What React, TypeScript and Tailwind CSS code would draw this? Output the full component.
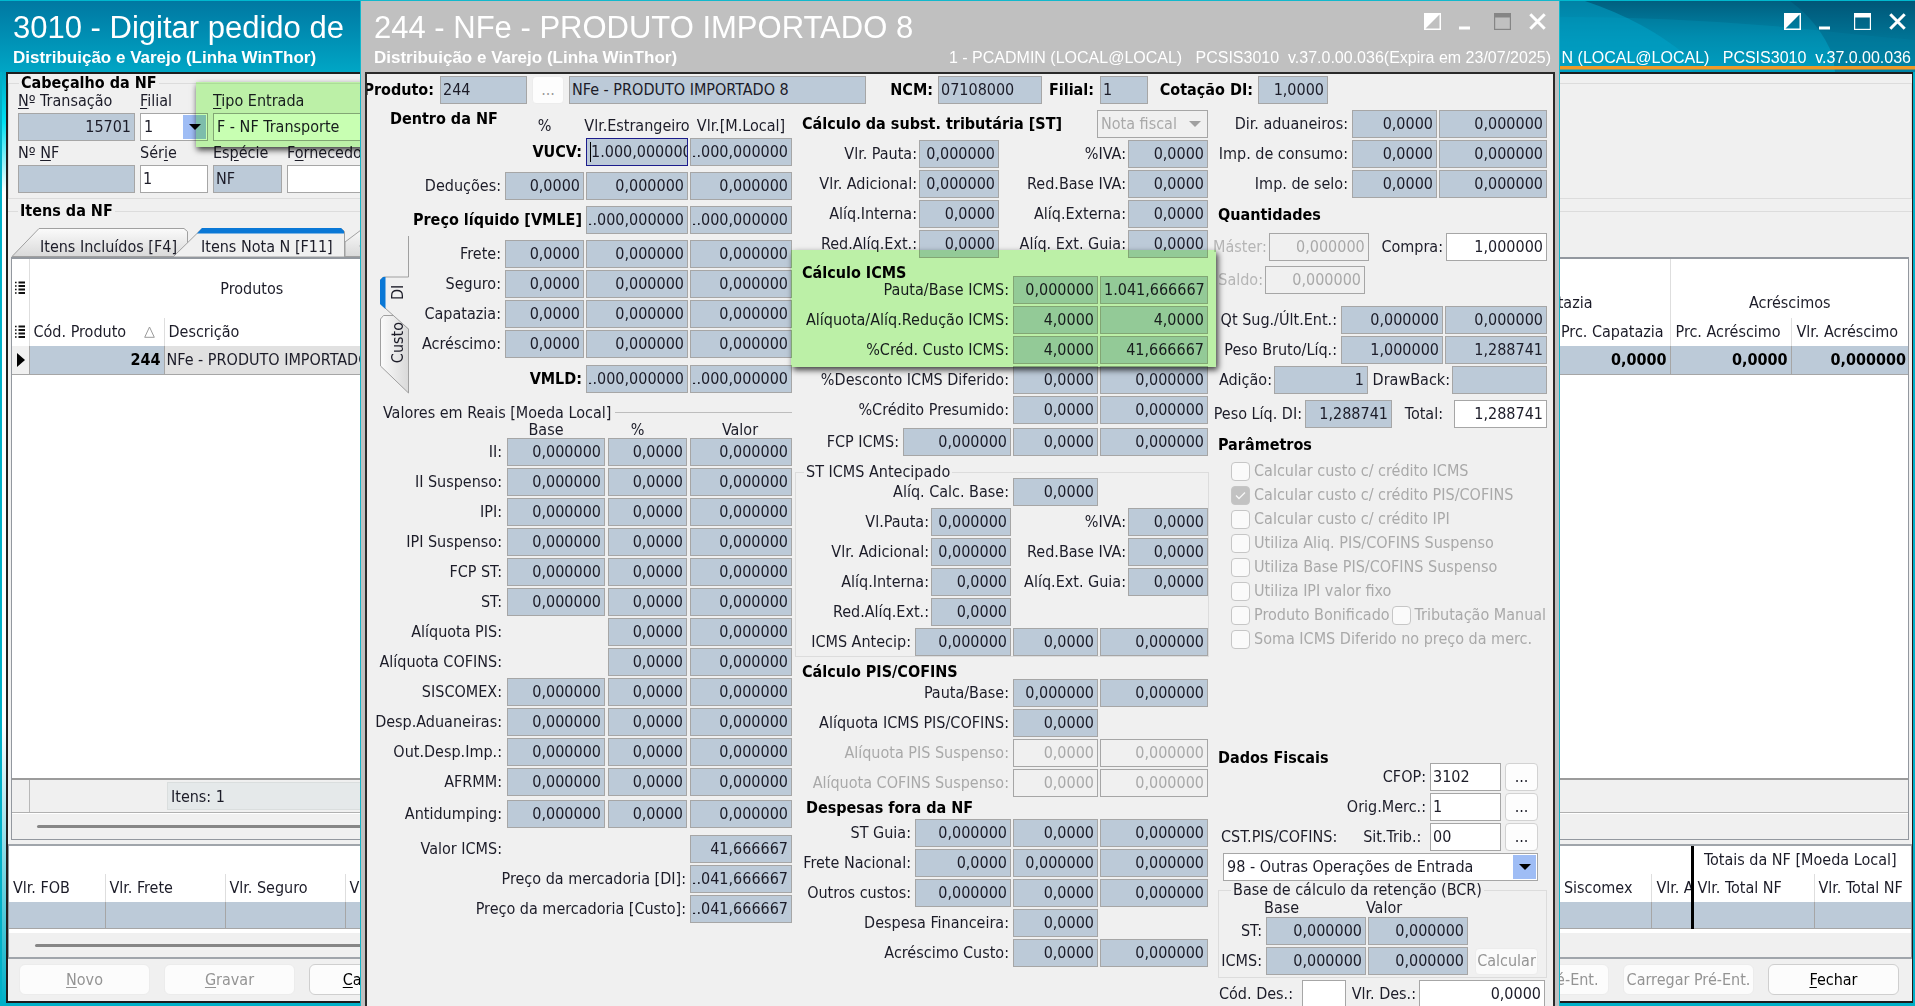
import { useId, type ReactNode } from "react";

type Tone = "locked" | "edit" | "off";

const tones: Record<Tone, string> = {
  locked: "bg-[#bccad8] text-[#1c1c28]",
  edit: "bg-white text-[#1c1c28]",
  off: "bg-[#f0f0f0] text-[#a9a9a9]",
};

const Z4 = "0,0000";
const Z6 = "0,000000";

/* ---------- basic controls ---------- */

function Field({
  id,
  name,
  value,
  w,
  tone = "locked",
  left = false,
  clip = false,
}: {
  id?: string;
  name?: string;
  value: string;
  w: string;
  tone?: Tone;
  left?: boolean;
  clip?: boolean;
}) {
  return (
    <input
      id={id}
      aria-label={name}
      type="text"
      dir={clip ? "rtl" : undefined}
      defaultValue={value}
      readOnly={tone === "locked"}
      disabled={tone === "off"}
      className={`h-7 shrink-0 border border-[#a6a6a6] pb-px outline-none ${clip ? "pr-[3px] pl-[2px]" : left ? "px-[2px]" : "px-[3px] text-right"} ${tones[tone]} ${w}`}
    />
  );
}

type Cell = { v?: string; w: string; tone?: Tone; clip?: boolean } | { label: string; w: string; off?: boolean };

function Row({
  label,
  cells,
  gap = "gap-[2px]",
  bold = false,
  off = false,
}: {
  label: string;
  cells: Cell[];
  gap?: string;
  bold?: boolean;
  off?: boolean;
}) {
  const base = useId();
  let current = label;
  return (
    <div className={`flex h-7 items-center justify-end ${gap}`}>
      <label
        htmlFor={`${base}-0`}
        className={`whitespace-nowrap pr-[2px] ${bold ? "font-bold text-black" : ""} ${off ? "text-[#a9a9a9]" : ""}`}
      >
        {label}
      </label>
      {cells.map((c, i) => {
        if ("label" in c) {
          current = c.label;
          return (
            <label
              key={i}
              htmlFor={`${base}-${i + 1}`}
              className={`shrink-0 whitespace-nowrap pr-[2px] text-right ${c.w}`}
            >
              {c.label}
            </label>
          );
        }
        if (c.v === undefined) return <span key={i} className={`shrink-0 ${c.w}`} />;
        return (
          <Field
            key={i}
            id={`${base}-${i}`}
            name={`${current} ${i + 1}`}
            value={c.v}
            w={c.w}
            tone={c.tone ?? (off ? "off" : "locked")}
            clip={c.clip}
          />
        );
      })}
    </div>
  );
}

function Arrow({ className }: { className: string }) {
  return (
    <svg viewBox="0 0 12 6" className={className} aria-hidden="true">
      <path d="M0 0h12L6 6z" fill="currentColor" />
    </svg>
  );
}

function Select({
  id,
  name,
  value,
  w,
  off = false,
}: {
  id?: string;
  name?: string;
  value: string;
  w: string;
  off?: boolean;
}) {
  return (
    <div className={`relative shrink-0 ${w}`}>
      <select
        id={id}
        aria-label={name}
        disabled={off}
        className={`h-7 w-full appearance-none border border-[#a6a6a6] px-[3px] pb-px opacity-100 outline-none ${off ? "bg-[#f0f0f0] text-[#a9a9a9]" : "bg-white"}`}
      >
        <option>{value}</option>
      </select>
      <span
        className={`pointer-events-none absolute inset-y-[2px] right-[2px] flex w-[23px] items-center justify-center ${off ? "text-[#a0a0a0]" : "bg-[#9fbdf5] text-black"}`}
      >
        <Arrow className="h-[6px] w-3" />
      </span>
    </div>
  );
}

function Dots({ w, off = false, name }: { w: string; off?: boolean; name: string }) {
  return (
    <button
      type="button"
      aria-label={name}
      disabled={off}
      className={`h-7 shrink-0 rounded border bg-[#fdfdfd] leading-none ${off ? "border-[#ececec] text-[#9a9a9a]" : "border-[#d2d2d2]"} ${w}`}
    >
      ...
    </button>
  );
}

function Heading({ children, className }: { children: ReactNode; className: string }) {
  return <h2 className={`whitespace-nowrap font-bold text-black ${className}`}>{children}</h2>;
}

function Check({ label, checked = false }: { label: string; checked?: boolean }) {
  return (
    <label className="flex items-center gap-1 whitespace-nowrap text-[#a9a9a9]">
      <span className="relative flex h-[19px] w-[19px]">
        <input
          type="checkbox"
          disabled
          defaultChecked={checked}
          className="h-[19px] w-[19px] appearance-none rounded border border-[#c6c6c6] bg-[#fafafa] checked:bg-[#c2c2c2]"
        />
        {checked && (
          <svg viewBox="0 0 19 19" className="absolute inset-0" aria-hidden="true">
            <path d="M5 9.500l3 3 6-6" fill="none" stroke="#f6f6f6" strokeWidth="1.4" />
          </svg>
        )}
      </span>
      {label}
    </label>
  );
}

/* ---------- window chrome ---------- */

function WindowButtons({ maxColor }: { maxColor: string }) {
  return (
    <div className="flex items-center text-white">
      <button type="button" aria-label="Alternar tema" className="mr-[18px]">
        <svg viewBox="0 0 17 17" className="h-[17px] w-[17px]" aria-hidden="true">
          <rect x=".75" y=".75" width="15.5" height="15.5" fill="none" stroke="#fff" strokeWidth="1.5" />
          <path d="M0 0h17L0 17z" fill="#fff" />
        </svg>
      </button>
      <button type="button" aria-label="Minimizar" className="mr-6">
        <svg viewBox="0 0 11 17" className="h-[17px] w-[11px]" aria-hidden="true">
          <rect y="13.5" width="11" height="3" fill="#fff" />
        </svg>
      </button>
      <button type="button" aria-label="Maximizar" className={`mr-[18px] ${maxColor}`}>
        <svg viewBox="0 0 17 17" className="h-[17px] w-[17px]" aria-hidden="true">
          <rect x=".6" y=".6" width="15.8" height="15.8" fill="none" stroke="currentColor" strokeWidth="1.2" />
          <rect width="17" height="4.5" fill="currentColor" />
        </svg>
      </button>
      <button type="button" aria-label="Fechar janela">
        <svg viewBox="0 0 17 17" className="h-[17px] w-[17px]" aria-hidden="true">
          <path d="M1.300 1.300l14.400 14.400M15.700 1.300L1.300 15.700" stroke="#fff" strokeWidth="3" />
        </svg>
      </button>
    </div>
  );
}

function TitleBar({ title, status, maxColor }: { title: string; status: string; maxColor: string }) {
  return (
    <header className="relative flex h-[71px] shrink-0 justify-between font-['Liberation_Sans',sans-serif] text-white">
      <div className="pt-[9px] pl-[13px] whitespace-nowrap">
        <h1 className="text-[31px] leading-9">{title}</h1>
        <p className="text-[17px] leading-6 font-bold">Distribuição e Varejo (Linha WinThor)</p>
      </div>
      <div className="flex flex-col items-end pt-3">
        <div className="pr-[9px]">
          <WindowButtons maxColor={maxColor} />
        </div>
        <p className="mt-4 pr-1 text-base leading-6 whitespace-pre">{status}</p>
      </div>
    </header>
  );
}

/* ---------- main order window ---------- */

function Labeled({ label, mark, children, id }: { label: string; mark: number; children: ReactNode; id: string }) {
  return (
    <div className="flex flex-col gap-[3px]">
      <label htmlFor={id} className="leading-[18px] whitespace-nowrap">
        {label.slice(0, mark)}
        <u className="underline-offset-2">{label[mark]}</u>
        {label.slice(mark + 1)}
      </label>
      {children}
    </div>
  );
}

function ListIcon() {
  return (
    <svg viewBox="0 0 10 15" className="mx-auto h-[15px] w-[10px]" aria-hidden="true">
      <path d="M3.500 1.500H10M3.500 5H10M3.500 8.500H10M3.500 12H10" stroke="#111" strokeWidth="1.8" />
      <path d="M0 1.500h1.600M0 5h1.600M0 8.500h1.600M0 12h1.600" stroke="#111" strokeWidth="1.6" />
    </svg>
  );
}

function HeaderFields() {
  return (
    <fieldset className="min-w-0 border border-[#dcdcdc] pb-[5px] pl-[9px]">
      <legend className="ml-[1px] px-[2px] leading-[18px] font-bold text-black">Cabeçalho da NF</legend>
      <div className="flex gap-[5px]">
        <Labeled id="transacao" label="Nº Transação" mark={0}>
          <Field id="transacao" value="15701" w="w-[117px]" />
        </Labeled>
        <Labeled id="filial" label="Filial" mark={0}>
          <Select id="filial" value="1" w="w-[68px]" />
        </Labeled>
        <div className="relative">
          <Labeled id="tipo" label="Tipo Entrada" mark={0}>
            <Select id="tipo" value="F - NF Transporte" w="w-[300px]" />
          </Labeled>
          <div className="pointer-events-none absolute -top-[10px] right-0 -bottom-[6px] -left-[17px] bg-[#c8ffb2] mix-blend-multiply shadow-[1px_3px_6px_rgba(0,0,0,0.75)]" />
        </div>
      </div>
      <div className="mt-[3px] flex gap-[5px]">
        <Labeled id="numero" label="Nº NF" mark={3}>
          <Field id="numero" value="" w="w-[117px]" />
        </Labeled>
        <Labeled id="serie" label="Série" mark={3}>
          <Field id="serie" value="1" w="w-[68px]" tone="edit" left />
        </Labeled>
        <Labeled id="especie" label="Espécie" mark={2}>
          <Field id="especie" value="NF" w="w-[69px]" left />
        </Labeled>
        <Labeled id="fornecedor" label="Fornecedor" mark={1}>
          <Field id="fornecedor" value="" w="w-[320px]" tone="edit" />
        </Labeled>
      </div>
    </fieldset>
  );
}

function Tabs() {
  return (
    <div className="relative ml-[3px] flex h-[29px] shrink-0 overflow-hidden">
      <svg viewBox="0 0 520 29" className="absolute inset-0 h-[29px] w-[520px]" aria-hidden="true">
        <defs>
          <linearGradient id="tabFace" x1="0" y1="0" x2="0" y2="1">
            <stop offset="0" stopColor="#fbfbfb" />
            <stop offset="1" stopColor="#d9d9d9" />
          </linearGradient>
        </defs>
        <path d="M334 28.500V14l18-13.500H500v28z" fill="url(#tabFace)" stroke="#a0a0a0" />
        <path d="M1 28.500L28 .5H173l3.500 3V28.500z" fill="url(#tabFace)" stroke="#a0a0a0" />
        <path d="M162 29L188 3.500 191 .5H330l3.500 3V29z" fill="#f0f0f0" stroke="#a0a0a0" />
        <path d="M186 5.500L191 0h139l3 3v2.500z" fill="#0a78d6" />
      </svg>
      <button type="button" className="relative w-[165px] pt-[7px] pl-[29px] text-left leading-6 whitespace-nowrap">
        Itens Incluídos [F4]
      </button>
      <button type="button" className="relative w-[168px] pt-[7px] pl-[25px] text-left leading-6 whitespace-nowrap">
        Itens Nota N [F11]
      </button>
      <button type="button" className="relative w-[170px] pt-[7px] pl-[15px] text-left leading-6 whitespace-nowrap">
        Cotas
      </button>
    </div>
  );
}

function ItemsTable() {
  return (
    <div className="mx-[3px] mb-1 flex min-h-0 flex-1 flex-col border border-t-2 border-[#93989f] bg-white">
      <table className="w-full table-fixed border-collapse">
        <colgroup>
          <col className="w-[17px]" />
          <col className="w-[135px]" />
          <col className="w-[310px]" />
          <col />
          <col className="w-[115px]" />
          <col className="w-[115px]" />
          <col className="w-[121px]" />
          <col className="w-[116px]" />
        </colgroup>
        <thead className="font-normal">
          <tr className="h-[59px]">
            <th className="border-r border-[#dedede]"><ListIcon /></th>
            <th colSpan={2} className="font-normal">Produtos</th>
            <th />
            <th colSpan={2} className="border-r border-[#dedede] pt-[28px] pl-[2px] font-normal">Capatazia</th>
            <th colSpan={2} className="pt-[28px] font-normal">Acréscimos</th>
          </tr>
          <tr className="h-7 text-left whitespace-nowrap">
            <th className="border-r border-[#dedede]"><ListIcon /></th>
            <th className="border-r border-[#dedede] pl-1 font-normal">
              <span className="flex items-center justify-between pr-[9px]">
                Cód. Produto
                <svg viewBox="0 0 11 12" className="h-3 w-[11px]" aria-hidden="true">
                  <path d="M5.500 1L10.300 11.300H.7z" fill="none" stroke="#9a9a9a" />
                </svg>
              </span>
            </th>
            <th className="pl-1 font-normal">Descrição</th>
            <th />
            <th className="pl-1 font-normal">Vlr. Capatazia</th>
            <th className="border-r border-[#dedede] pl-[5px] font-normal">Prc. Capatazia</th>
            <th className="border-r border-[#dedede] pl-1 font-normal">Prc. Acréscimo</th>
            <th className="pl-1 font-normal">Vlr. Acréscimo</th>
          </tr>
        </thead>
        <tbody>
          <tr className="h-7 border-b border-[#a6a6a6] bg-[#bccad8] text-right font-bold whitespace-nowrap text-black">
            <td className="border-r border-[#a6a6a6] bg-[#f0f0f0] pl-[5px]">
              <svg viewBox="0 0 8 14" className="h-[14px] w-2" aria-hidden="true">
                <path d="M0 0l8 7-8 7z" fill="#000" />
              </svg>
            </td>
            <td className="border-r border-[#a6a6a6] pr-[3px]">244</td>
            <td className="bg-[#e1e1e1] pl-[2px] text-left font-normal text-[#1c1c28]">NFe - PRODUTO IMPORTADO 8</td>
            <td className="bg-[#e1e1e1]" />
            <td className="pr-1">0,0000</td>
            <td className="border-r border-[#a6a6a6] pr-1">0,0000</td>
            <td className="border-r border-[#a6a6a6] pr-1">0,0000</td>
            <td className="pr-[2px]">0,000000</td>
          </tr>
        </tbody>
      </table>
      <div className="flex-1" />
      <div className="flex h-[35px] border-t-2 border-b border-t-[#9b9b9b] border-b-[#b0b0b0] bg-[#f0f0f0]">
        <div className="w-[18px] border-r border-[#b8b8b8]" />
        <div className="my-[2px] ml-[137px] w-[700px] border border-[#dadede] bg-[#e5e9ea] pl-[3px] leading-7">Itens: 1</div>
      </div>
      <div className="flex h-[26px] items-center border-t border-white bg-[#f0f0f0] pl-[25px]">
        <div className="h-[3px] w-3/5 rounded bg-[#868686]" />
      </div>
    </div>
  );
}

function TotalsTable() {
  const cell = "border-r border-[#dedede] pl-1 font-normal";
  const data = "border-r border-[#a6a6a6]";
  return (
    <div className="shrink-0 border-x border-y-2 border-x-[#93989f] border-y-[#a0a5ab] bg-white">
      <table className="w-full table-fixed border-collapse">
        <colgroup>
          <col className="w-[96px]" />
          <col className="w-[120px]" />
          <col className="w-[120px]" />
          <col className="w-[120px]" />
          <col />
          <col className="w-[92px]" />
          <col className="w-[40px]" />
          <col className="w-[122px]" />
          <col className="w-[97px]" />
        </colgroup>
        <thead>
          <tr className="h-7">
            <th colSpan={7} />
            <th colSpan={2} className="border-l-[3px] border-black pr-1 font-normal whitespace-nowrap">
              Totais da NF [Moeda Local]
            </th>
          </tr>
          <tr className="h-7 text-left whitespace-nowrap">
            <th className={cell}>Vlr. FOB</th>
            <th className={cell}>Vlr. Frete</th>
            <th className={cell}>Vlr. Seguro</th>
            <th className={cell}>Vlr. Outros</th>
            <th />
            <th className={cell}>Siscomex</th>
            <th className="overflow-hidden pl-1 font-normal">Vlr. AFRMM</th>
            <th className="border-r border-l-[3px] border-r-[#dedede] border-l-black pl-1 font-normal">Vlr. Total NF</th>
            <th className="pl-1 font-normal">Vlr. Total NF</th>
          </tr>
        </thead>
        <tbody>
          <tr className="h-[27px] border-b border-[#a6a6a6] bg-[#bccad8]">
            <td className={data} />
            <td className={data} />
            <td className={data} />
            <td className={data} />
            <td />
            <td className={data} />
            <td />
            <td className="border-r border-l-[3px] border-r-[#a6a6a6] border-l-black" />
            <td />
          </tr>
        </tbody>
      </table>
      <div className="mt-1 flex h-[24px] items-center bg-[#f0f0f0] pl-[26px]">
        <div className="h-[3px] w-3/5 rounded bg-[#868686]" />
      </div>
    </div>
  );
}

function Action({ label, mark, off = false }: { label: string; mark?: number; off?: boolean }) {
  return (
    <button
      type="button"
      disabled={off}
      className={`h-[31px] w-[131px] rounded-md border bg-[#fcfcfc] whitespace-nowrap ${off ? "border-[#ececec] text-[#949494]" : "border-[#cfcfcf] text-black"}`}
    >
      {mark === undefined ? (
        label
      ) : (
        <>
          <u className="underline-offset-2">{label[mark]}</u>
          {label.slice(mark + 1)}
        </>
      )}
    </button>
  );
}

function OrderWindow() {
  return (
    <section className="flex h-full flex-col border-t border-[#00b9cf] bg-[#00b0c8]">
      <div className="relative shrink-0 bg-gradient-to-b from-[#0078a2] to-[#00a6c5]">
        <svg viewBox="0 0 400 71" preserveAspectRatio="none" className="absolute top-0 right-0 h-[71px] w-[400px]" aria-hidden="true">
          <defs>
            <linearGradient id="deep" x1="0" y1="0" x2="0" y2="1">
              <stop offset="0" stopColor="#005f80" />
              <stop offset=".5" stopColor="#0086a8" />
              <stop offset="1" stopColor="#009fc0" />
            </linearGradient>
          </defs>
          <rect width="400" height="71" fill="url(#deep)" />
          <path d="M0 0H70Q130 20 172 55L178 71H0z" fill="#00a5cc" opacity=".5" />
          <path d="M0 16Q160 14 310 30T400 36V71H0z" fill="#00a0c4" opacity=".25" />
          <path d="M275 0Q305 22 318 55L320 71H400V0z" fill="#003f60" opacity=".28" />
          <path d="M0 65H400v3.500H0z" fill="#ef9a27" />
        </svg>
        <TitleBar
          title="3010 - Digitar pedido de"
          status="1 - PCADMIN (LOCAL@LOCAL)   PCSIS3010  v.37.0.00.036"
          maxColor="text-white"
        />
      </div>
      <div className="flex min-h-0 flex-1 pb-[3px]">
        <div className="w-[6px] shrink-0 border-l-2 border-[#00b0c8] bg-[linear-gradient(to_bottom,#00a8c4_0,#00e0f2_50px,#ffffff_120px,#ffffff_70%,#00b0c8_100%)]" />
        <main className="mr-[2px] flex min-w-0 flex-1 flex-col border-2 border-r border-[#1d1d1d] bg-[#f0f0f0]">
          <HeaderFields />
          <fieldset className="mt-[3px] flex min-h-0 min-w-0 flex-1 flex-col border-t border-[#dcdcdc]">
            <legend className="ml-[10px] px-[2px] leading-[18px] font-bold text-black">Itens da NF</legend>
            <div className="flex h-full flex-col pt-2">
              <Tabs />
              <ItemsTable />
            </div>
          </fieldset>
          <TotalsTable />
          <footer className="flex h-[42px] shrink-0 items-center gap-[14px] pr-[13px] pb-px pl-[11px]">
            <Action label="Novo" mark={0} off />
            <Action label="Gravar" mark={0} off />
            <Action label="Cancelar" mark={0} />
            <span className="flex-1" />
            <Action label="Gravar Pré-Ent." off />
            <Action label="Carregar Pré-Ent." off />
            <Action label="Fechar" mark={0} />
          </footer>
        </main>
      </div>
    </section>
  );
}

/* ---------- product window ---------- */

function ProductBar() {
  return (
    <div className="flex h-9 items-center pb-[4px]">
      <label htmlFor="produto" className="flex w-[67px] justify-end overflow-hidden font-bold text-black">Produto:</label>
      <div className="ml-[6px] flex items-center">
        <Field id="produto" value="244" w="w-[87px]" left />
      </div>
      <div className="mx-[5px] flex">
        <Dots name="Buscar produto" w="w-8" off />
      </div>
      <Field name="Descrição do produto" value="NFe - PRODUTO IMPORTADO 8" w="w-[297px]" left />
      <label htmlFor="ncm" className="mr-[5px] w-[67px] text-right font-bold text-black">NCM:</label>
      <Field id="ncm" value="07108000" w="w-[104px]" left />
      <label htmlFor="filialProduto" className="mr-[6px] w-[52px] text-right font-bold text-black">Filial:</label>
      <Field id="filialProduto" value="1" w="w-12" left />
      <label htmlFor="cotacao" className="mr-[5px] w-[105px] text-right font-bold whitespace-nowrap text-black">Cotação DI:</label>
      <Field id="cotacao" value="1,0000" w="w-[70px]" />
    </div>
  );
}

const P = "w-[79px]";
const E = "w-[102px]";
const L = "w-[102px]";
const B = "w-[98px]";

function SideTabs() {
  return (
    <div className="relative w-8 shrink-0">
      <svg viewBox="0 0 32 162" className="absolute inset-0 h-[162px] w-8" aria-hidden="true">
        <defs>
          <linearGradient id="sideFace" x1="0" y1="0" x2="1" y2="0">
            <stop offset="0" stopColor="#fbfbfb" />
            <stop offset="1" stopColor="#d9d9d9" />
          </linearGradient>
        </defs>
        <path d="M1.500 85l3-3.500h12L29.500 95v64L1.500 132z" fill="url(#sideFace)" stroke="#a0a0a0" />
        <path d="M29.500 2v41H4.500l-3 3v24L29.500 95" fill="#f0f0f0" stroke="#a0a0a0" />
        <path d="M6.500 43H4l-3 3v24l5.500 5z" fill="#0a78d6" />
      </svg>
      <button type="button" className="absolute top-[48px] left-[10px] h-5 rotate-180 leading-[18px] [writing-mode:vertical-rl]">DI</button>
      <button type="button" className="absolute top-[88px] left-[10px] rotate-180 leading-[18px] [writing-mode:vertical-rl]">Custo</button>
    </div>
  );
}

function InsideInvoice() {
  const three = (label: string) => (
    <Row label={label} cells={[{ v: Z4, w: P }, { v: Z6, w: E }, { v: Z6, w: L }]} />
  );
  const tax = (label: string, base = true) => (
    <Row key={label} gap="gap-[3px]" label={label} cells={[base ? { v: Z6, w: B } : { w: B }, { v: Z4, w: P }, { v: Z6, w: L }]} />
  );
  return (
    <div className="pr-[3px]">
      <div className="flex h-7 items-end gap-[2px] leading-6">
        <Heading className="flex-1 self-start pl-[23px] leading-[18px]">Dentro da NF</Heading>
        <span className="flex w-[79px] justify-center">%</span>
        <span className="flex w-[102px] justify-center whitespace-nowrap">Vlr.Estrangeiro</span>
        <span className="flex w-[102px] justify-center whitespace-nowrap">Vlr.[M.Local]</span>
      </div>
      <div className="flex flex-col gap-[6px]">
        <div className="flex h-7 items-center justify-end gap-[2px]">
          <label htmlFor="vucv" className="pr-[2px] font-bold text-black">VUCV:</label>
          <div className="relative flex">
            <input
              id="vucv"
              type="text"
              defaultValue="1.000,000000"
              className="h-7 w-[102px] border border-[#1c1c8c] bg-[#bccad8] pb-px pl-1 text-[#1c1c28] outline-none"
            />
            <span className="absolute top-1 left-1 h-5 w-px bg-black" />
          </div>
          <Field name="VUCV moeda local" value="1.000,000000" w={L} clip />
        </div>
        {three("Deduções:")}
        <Row label="Preço líquido [VMLE]" bold cells={[{ v: "1.000,000000", w: E, clip: true }, { v: "1.000,000000", w: L, clip: true }]} />
      </div>
      <div className="flex pl-3">
        <SideTabs />
        <div className="flex flex-1 flex-col gap-[2px] pt-[6px]">
          {three("Frete:")}
          {three("Seguro:")}
          {three("Capatazia:")}
          {three("Acréscimo:")}
          <div className="pt-[5px]">
            <Row label="VMLD:" bold cells={[{ v: "1.000,000000", w: E, clip: true }, { v: "1.000,000000", w: L, clip: true }]} />
          </div>
        </div>
      </div>
      <div className="mt-[11px] flex h-[17px] items-center gap-1 pl-4 leading-[17px]">
        <h3 className="whitespace-nowrap">Valores em Reais [Moeda Local]</h3>
        <span className="h-px flex-1 bg-[#bdbdbd]" />
      </div>
      <div className="flex justify-end gap-[3px] text-center leading-[17px]">
        <span className="w-[98px] pr-5">Base</span>
        <span className="w-[79px] pr-5">%</span>
        <span className="w-[102px] pr-[2px]">Valor</span>
      </div>
      <div className="flex flex-col gap-[2px]">
        {["II:", "II Suspenso:", "IPI:", "IPI Suspenso:", "FCP ST:", "ST:"].map((l) => tax(l))}
        {["Alíquota PIS:", "Alíquota COFINS:"].map((l) => tax(l, false))}
        {["SISCOMEX:", "Desp.Aduaneiras:", "Out.Desp.Imp.:", "AFRMM:"].map((l) => tax(l))}
      </div>
      <div className="mt-1">{tax("Antidumping:")}</div>
      <div className="mt-[7px] flex flex-col gap-[2px]">
        <Row gap="gap-[3px]" label="Valor ICMS:" cells={[{ w: B }, { w: P }, { v: "41,666667", w: L }]} />
        <Row label="Preço da mercadoria [DI]:" cells={[{ v: "1.041,666667", w: L, clip: true }]} />
        <Row label="Preço da mercadoria [Custo]:" cells={[{ v: "1.041,666667", w: L, clip: true }]} />
      </div>
    </div>
  );
}

const M = "w-[85px]";
const R = "w-[108px]";
const S = "w-[80px]";

function TaxCalculation() {
  const pair = (a: string, va: string, b: string) => (
    <Row gap="gap-0" label={a} cells={[{ v: va, w: S }, { label: b, w: "w-[129px]" }, { v: Z4, w: S }]} />
  );
  const antecip = (a: string, va: string, b: string) => (
    <Row gap="gap-0" label={a} cells={[{ v: va, w: S }, { label: b, w: "w-[117px]" }, { v: Z4, w: S }]} />
  );
  const two = (label: string, a = Z4, b = Z6, off = false) => (
    <Row label={label} off={off} cells={[{ v: a, w: M }, { v: b, w: R }]} />
  );
  const one = (label: string) => <Row label={label} cells={[{ v: Z4, w: M }, { w: R }]} />;
  return (
    <div className="pr-[5px]">
      <div className="mb-[2px] flex h-7 items-center justify-between pl-[7px]">
        <Heading className="leading-6">Cálculo da subst. tributária [ST]</Heading>
        <Select name="Base do cálculo ST" value="Nota fiscal" w="w-[111px]" off />
      </div>
      <div className="flex flex-col gap-[2px]">
        {pair("Vlr. Pauta:", Z6, "%IVA:")}
        {pair("Vlr. Adicional:", Z6, "Red.Base IVA:")}
        {pair("Alíq.Interna:", Z4, "Alíq.Externa:")}
        {pair("Red.Alíq.Ext.:", Z4, "Alíq. Ext. Guia:")}
      </div>
      <div className="relative">
        <Heading className="h-[18px] pt-[7px] pl-[7px] leading-none">Cálculo ICMS</Heading>
        <div className="flex flex-col gap-[2px]">
          {two("Pauta/Base ICMS:", Z6, "1.041,666667")}
          {two("Alíquota/Alíq.Redução ICMS:", "4,0000", "4,0000")}
          {two("%Créd. Custo ICMS:", "4,0000", "41,666667")}
        </div>
        <div className="pointer-events-none absolute -top-2 -right-2 -bottom-[3px] -left-1 z-10 bg-[#c8ffb2] mix-blend-multiply shadow-[2px_3px_6px_rgba(0,0,0,0.75)]" />
      </div>
      <div className="mt-[2px] flex flex-col gap-[2px]">
        {two("%Desconto ICMS Diferido:")}
        {two("%Crédito Presumido:")}
      </div>
      <div className="mt-1">
        <Row label="FCP ICMS:" cells={[{ v: Z6, w: "w-[108px]" }, { v: Z4, w: M }, { v: Z6, w: R }]} />
      </div>
      <fieldset className="mt-[10px] -mr-px min-w-0 border border-[#dcdcdc]">
        <legend className="ml-[8px] px-[2px] leading-3">ST ICMS Antecipado</legend>
        <div className="flex flex-col gap-[2px]">
          {one("Alíq. Calc. Base:")}
          {antecip("Vl.Pauta:", Z6, "%IVA:")}
          {antecip("Vlr. Adicional:", Z6, "Red.Base IVA:")}
          {antecip("Alíq.Interna:", Z4, "Alíq.Ext. Guia:")}
          <Row gap="gap-0" label="Red.Alíq.Ext.:" cells={[{ v: Z4, w: S }, { w: "w-[197px]" }]} />
          <Row label="ICMS Antecip:" cells={[{ v: Z6, w: "w-[96px]" }, { v: Z4, w: M }, { v: Z6, w: R }]} />
        </div>
      </fieldset>
      <Heading className="h-[22px] pt-[7px] pl-[7px] leading-none">Cálculo PIS/COFINS</Heading>
      <div className="flex flex-col gap-[2px]">
        {two("Pauta/Base:", Z6)}
        {one("Alíquota ICMS PIS/COFINS:")}
        {two("Alíquota PIS Suspenso:", Z4, Z6, true)}
        {two("Alíquota COFINS Suspenso:", Z4, Z6, true)}
      </div>
      <Heading className="h-[22px] pl-[11px] leading-[22px]">Despesas fora da NF</Heading>
      <div className="flex flex-col gap-[2px]">
        <Row label="ST Guia:" cells={[{ v: Z6, w: "w-[96px]" }, { v: Z4, w: M }, { v: Z6, w: R }]} />
        <Row label="Frete Nacional:" cells={[{ v: Z4, w: "w-[96px]" }, { v: Z6, w: M }, { v: Z6, w: R }]} />
        <Row label="Outros custos:" cells={[{ v: Z6, w: "w-[96px]" }, { v: Z4, w: M }, { v: Z6, w: R }]} />
        {one("Despesa Financeira:")}
        {two("Acréscimo Custo:")}
      </div>
    </div>
  );
}

function FiscalRow({ id, label, value }: { id: string; label: string; value: string }) {
  return (
    <div className="flex h-7 items-center justify-end gap-1 pr-[9px]">
      <label htmlFor={id} className="whitespace-pre">{label}</label>
      <Field id={id} value={value} w="w-[71px]" tone="edit" left />
      <Dots name={`Buscar ${id}`} w="w-[33px]" />
    </div>
  );
}

function Quantities() {
  return (
    <div className="pr-[6px]">
      <div className="flex flex-col gap-[2px]">
        {["Dir. aduaneiros:", "Imp. de consumo:", "Imp. de selo:"].map((l) => (
          <Row key={l} label={l} cells={[{ v: Z4, w: M }, { v: Z6, w: R }]} />
        ))}
      </div>
      <Heading className="h-[35px] pl-[5px] leading-[34px]">Quantidades</Heading>
      <div className="flex h-7 items-center justify-end">
        <label htmlFor="master" className="pr-[2px] text-[#b5b5b5]">Máster:</label>
        <Field id="master" value={Z6} w="w-[100px]" tone="off" />
        <label htmlFor="compra" className="w-[81px] pr-[3px] text-right">Compra:</label>
        <Field id="compra" value="1,000000" w="w-[101px]" tone="edit" />
      </div>
      <div className="mt-[5px] flex h-7 items-center justify-end">
        <label htmlFor="saldo" className="pr-[2px] text-[#b5b5b5]">Saldo:</label>
        <Field id="saldo" value={Z6} w="w-[100px]" tone="off" />
        <span className="w-[182px]" />
      </div>
      <div className="mt-3 flex flex-col gap-[2px]">
        <Row label="Qt Sug./Últ.Ent.:" cells={[{ v: Z6, w: L }, { v: Z6, w: L }]} />
        <Row label="Peso Bruto/Líq.:" cells={[{ v: "1,000000", w: L }, { v: "1,288741", w: L }]} />
        <Row gap="gap-0" label="Adição:" cells={[{ v: "1", w: "w-[94px]" }, { label: "DrawBack:", w: "w-[84px]" }, { v: "", w: "w-[95px]" }]} />
      </div>
      <div className="mt-[6px] flex h-7 items-center justify-end">
        <label htmlFor="pesodi" className="pr-[3px] whitespace-nowrap">Peso Líq. DI:</label>
        <Field id="pesodi" value="1,288741" w="w-[87px]" />
        <label htmlFor="total" className="w-[62px] pr-[11px] text-right">Total:</label>
        <Field id="total" value="1,288741" w="w-[93px]" tone="edit" />
      </div>
      <Heading className="h-[31px] pt-[5px] pl-[5px] leading-6">Parâmetros</Heading>
      <div className="flex flex-col pl-[18px] leading-6">
        <Check label="Calcular custo c/ crédito ICMS" />
        <Check label="Calcular custo c/ crédito PIS/COFINS" checked />
        <Check label="Calcular custo c/ crédito IPI" />
        <Check label="Utiliza Aliq. PIS/COFINS Suspenso" />
        <Check label="Utiliza Base PIS/COFINS Suspenso" />
        <Check label="Utiliza IPI valor fixo" />
        <div className="flex gap-[2px]">
          <Check label="Produto Bonificado" />
          <Check label="Tributação Manual" />
        </div>
        <Check label="Soma ICMS Diferido no preço da merc." />
      </div>
      <Heading className="mt-[99px] h-[13px] pl-[5px] leading-none">Dados Fiscais</Heading>
      <div className="flex flex-col gap-[2px]">
        <FiscalRow id="cfop" label="CFOP:" value="3102" />
        <FiscalRow id="origem" label="Orig.Merc.:" value="1" />
        <div className="flex items-center">
          <span className="pl-2 whitespace-nowrap">CST.PIS/COFINS:</span>
          <div className="flex-1">
            <FiscalRow id="situacao" label="Sit.Trib.: " value="00" />
          </div>
        </div>
        <div className="flex pr-[9px] pl-[10px]">
          <Select name="CST PIS/COFINS" value="98 - Outras Operações de Entrada" w="w-full" />
        </div>
      </div>
      <fieldset className="mt-px ml-[5px] min-w-0 border border-[#dcdcdc] pb-[2px]">
        <legend className="ml-[12px] px-[2px] leading-4">Base de cálculo da retenção (BCR)</legend>
        <div className="flex leading-[19px]">
          <span className="w-[102px] pl-[45px]">Base</span>
          <span className="pl-[45px]">Valor</span>
        </div>
        <div className="flex flex-col gap-[2px]">
          <Row label="ST:" cells={[{ v: Z6, w: "w-[100px]" }, { v: Z6, w: "w-[100px]" }, { w: "w-[76px]" }]} />
          <div className="flex items-center pr-2">
            <div className="flex-1">
              <Row label="ICMS:" cells={[{ v: Z6, w: "w-[100px]" }, { v: Z6, w: "w-[100px]" }]} />
            </div>
            <button type="button" disabled className="ml-[7px] h-[27px] w-[63px] rounded border border-[#ececec] bg-[#fafafa] text-[#949494]">
              Calcular
            </button>
          </div>
        </div>
      </fieldset>
      <div className="mt-[2px] flex h-7 items-center justify-end pr-[2px]">
        <label htmlFor="coddes" className="pr-[9px] whitespace-nowrap">Cód. Des.:</label>
        <Field id="coddes" value="" w="w-[44px]" tone="edit" />
        <label htmlFor="vlrdes" className="w-[73px] pr-[3px] text-right whitespace-nowrap">Vlr. Des.:</label>
        <Field id="vlrdes" value={Z4} w="w-[126px]" tone="edit" />
      </div>
    </div>
  );
}

function ProductWindow() {
  return (
    <section className="absolute inset-y-0 right-[355px] left-[360px] flex flex-col overflow-hidden border border-b-0 border-[#12b8cc] bg-[#c0c0c0]">
      <div className="pr-1">
        <TitleBar
          title="244 - NFe - PRODUTO IMPORTADO 8"
          status="1 - PCADMIN (LOCAL@LOCAL)   PCSIS3010  v.37.0.00.036(Expira em 23/07/2025)"
          maxColor="text-[#858585]"
        />
      </div>
      <div className="mx-1 flex-1 border-2 border-b-0 border-[#2a2a2a] bg-[#f0f0f0]">
        <ProductBar />
        <div className="grid grid-cols-[minmax(0,428fr)_minmax(0,418fr)_minmax(0,340fr)]">
          <InsideInvoice />
          <TaxCalculation />
          <Quantities />
        </div>
      </div>
    </section>
  );
}

export default function App() {
  return (
    <div className="relative h-screen overflow-hidden font-['DejaVu_Sans_Condensed','Noto_Sans',sans-serif] text-base leading-6 text-[#1c1c28]">
      <OrderWindow />
      <ProductWindow />
    </div>
  );
}
